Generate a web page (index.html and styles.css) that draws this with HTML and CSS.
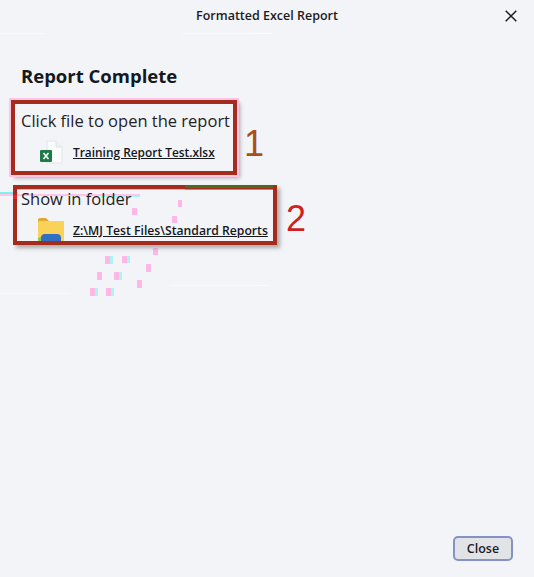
FILE: index.html
```html
<!DOCTYPE html>
<html lang="en">
<head>
<meta charset="utf-8">
<title>Formatted Excel Report</title>
<link rel="stylesheet" href="styles.css">
</head>
<body>
<div class="dialog">
  <svg class="noise" width="534" height="577" viewBox="0 0 534 577">
    <rect x="16" y="188" width="169" height="2" fill="#ff9fbf"/>
    <rect x="185" y="188" width="88" height="2" fill="#ff5fa8"/>
    <rect x="0" y="192" width="18" height="2" fill="#7ff2ee"/>
    <rect x="0" y="194" width="140" height="2" fill="#ffc4ea"/>
    <rect x="100" y="196" width="40" height="1" fill="#a8f6f4"/>
    <g fill="#ffb8e6">
      <rect x="132" y="208" width="5" height="7"/>
      <rect x="172" y="216" width="5" height="7"/>
      <rect x="178" y="200" width="4" height="7"/>
      <rect x="153" y="248" width="5" height="7"/>
      <rect x="105" y="256" width="5" height="8"/>
      <rect x="122" y="256" width="5" height="7"/>
      <rect x="146" y="264" width="5" height="8"/>
      <rect x="97" y="272" width="5" height="8"/>
      <rect x="114" y="272" width="5" height="8"/>
      <rect x="137" y="280" width="5" height="8"/>
      <rect x="90" y="288" width="5" height="8"/>
      <rect x="106" y="288" width="5" height="8"/>
    </g>
    <g fill="#a8f6f4">
      <rect x="110" y="256" width="3" height="8"/>
      <rect x="127" y="256" width="3" height="7"/>
      <rect x="119" y="272" width="3" height="8"/>
      <rect x="95" y="288" width="3" height="8"/>
      <rect x="111" y="288" width="3" height="8"/>
    </g>
    <g fill="#fff" opacity=".5">
      <rect x="0" y="33" width="44" height="1"/>
      <rect x="182" y="33" width="90" height="1"/>
      <rect x="0" y="293" width="70" height="1"/>
      <rect x="170" y="285" width="100" height="1"/>
    </g>
  </svg>
  <header class="titlebar">
    <span class="title">Formatted Excel Report</span>
    <svg class="x" width="12" height="12" viewBox="0 0 12 12"><path d="M.7.7l10.6 10.6M11.3.7L.7 11.3" stroke="#1b1b1f" stroke-width="1.5" fill="none"/></svg>
  </header>
  <main class="content">
    <h1 class="heading">Report Complete</h1>
    <section class="group first">
      <div class="label">Click file to open the report</div>
      <div class="row">
        <svg class="icon" width="26" height="24" viewBox="0 0 26 24">
          <path d="M9 1h9l6 6v16H9z" fill="#fafbfb" stroke="#e2e6e6"/>
          <path d="M18 1v6h6" fill="#eef1f1" stroke="#e2e6e6"/>
          <rect x="2" y="10" width="12" height="12" rx="1" fill="#1f7a4a"/>
          <path d="M5.500 13l5 6M10.500 13l-5 6" stroke="#fff" stroke-width="1.500"/>
        </svg>
        <a class="link link-file" href="#">Training Report Test.xlsx</a>
      </div>
    </section>
    <section class="group second">
      <div class="label">Show in folder</div>
      <div class="row">
        <svg class="icon" width="26" height="24" viewBox="0 0 26 24">
          <path d="M0 2a2 2 0 0 1 2-2h6l3 3h13a2 2 0 0 1 2 2v3H0z" fill="#e0a92e"/>
          <rect x="0" y="3" width="26" height="21" rx="2" fill="#fbd258"/>
          <path d="M3 24v-4a4 4 0 0 1 4-4h12a4 4 0 0 1 4 4v4z" fill="#2f6fc4"/>
          <path d="M0 20v2a2 2 0 0 0 2 2h1v-5z" fill="#8cc65a"/>
        </svg>
        <a class="link link-folder" href="#">Z:\MJ Test Files\Standard Reports</a>
      </div>
    </section>
  </main>
  <footer class="footer">
    <button class="close" type="button">Close</button>
  </footer>
  <div class="mark mark-one"></div>
  <div class="mark mark-two"></div>
  <span class="num num-one">1</span>
  <span class="num num-two">2</span>
</div>
</body>
</html>
```

FILE: styles.css
```css
* { box-sizing: border-box; }
html, body { margin: 0; height: 100%; }
body { background: #f3f4f7; font-family: "Open Sans", "Noto Sans", sans-serif; color: #1b1b1f; }
.dialog { position: relative; width: 534px; height: 577px; display: flex; flex-direction: column; overflow: hidden; }
.titlebar { height: 31px; display: flex; align-items: center; justify-content: center; position: relative; }
.title { font-size: 12.5px; font-weight: 600; }
.x { position: absolute; left: 505px; top: 10px; }
.content { flex: 1; padding: 32px 21px 0; }
.heading { margin: 0; font-size: 18.5px; line-height: 26px; font-weight: 700; color: #14181f; }
.group { display: flex; flex-direction: column; }
.first { margin-top: 20px; }
.second { margin-top: 22px; }
.label { font-size: 16.5px; line-height: 24px; color: #1f2226; }
.row { display: flex; align-items: center; gap: 9px; padding: 6px 0 0 17px; height: 32px; }
.icon { flex: none; width: 26px; height: 24px; margin-top: -1px; }
.link { font-weight: 600; color: #14181f; text-decoration: underline; }
.link-file { font-size: 11.9px; }
.link-folder { font-size: 12.2px; }
.footer { display: flex; justify-content: flex-end; padding: 0 21px 16px; }
.close { width: 60px; height: 25px; padding: 0; border: 2px solid #8891c4; border-radius: 5px; background: #e1e4e6; font: 600 12.5px "Open Sans", sans-serif; color: #1b1b1f; box-shadow: 0 0 3px #e8f2fb; }
.mark { position: absolute; border: 4px solid #a52c1c; box-shadow: 0 0 0 2px #ffc4e8, 3px 3px 4px rgba(80,80,80,.45); }
.mark-one { left: 11px; top: 100px; width: 226px; height: 75px; }
.mark-two { left: 13px; top: 185px; width: 264px; height: 60px; box-shadow: 3px 3px 4px rgba(80,80,80,.45); }
.mark-two::before { content: ""; position: absolute; left: 168px; right: 0; top: -4px; height: 3px; background: #4f6a1e; }
.mark-two::after { content: ""; position: absolute; left: -4px; top: 6px; width: 4px; height: 4px; background: #e8202a; }
.num { position: absolute; font-family: "Liberation Sans", sans-serif; font-size: 36px; line-height: 40px; }
.num-one { left: 244px; top: 124px; color: #a8501c; }
.num-two { left: 286px; top: 199px; color: #cf1f1f; }
.noise { position: absolute; left: 0; top: 0; z-index: -1; pointer-events: none; }
```
